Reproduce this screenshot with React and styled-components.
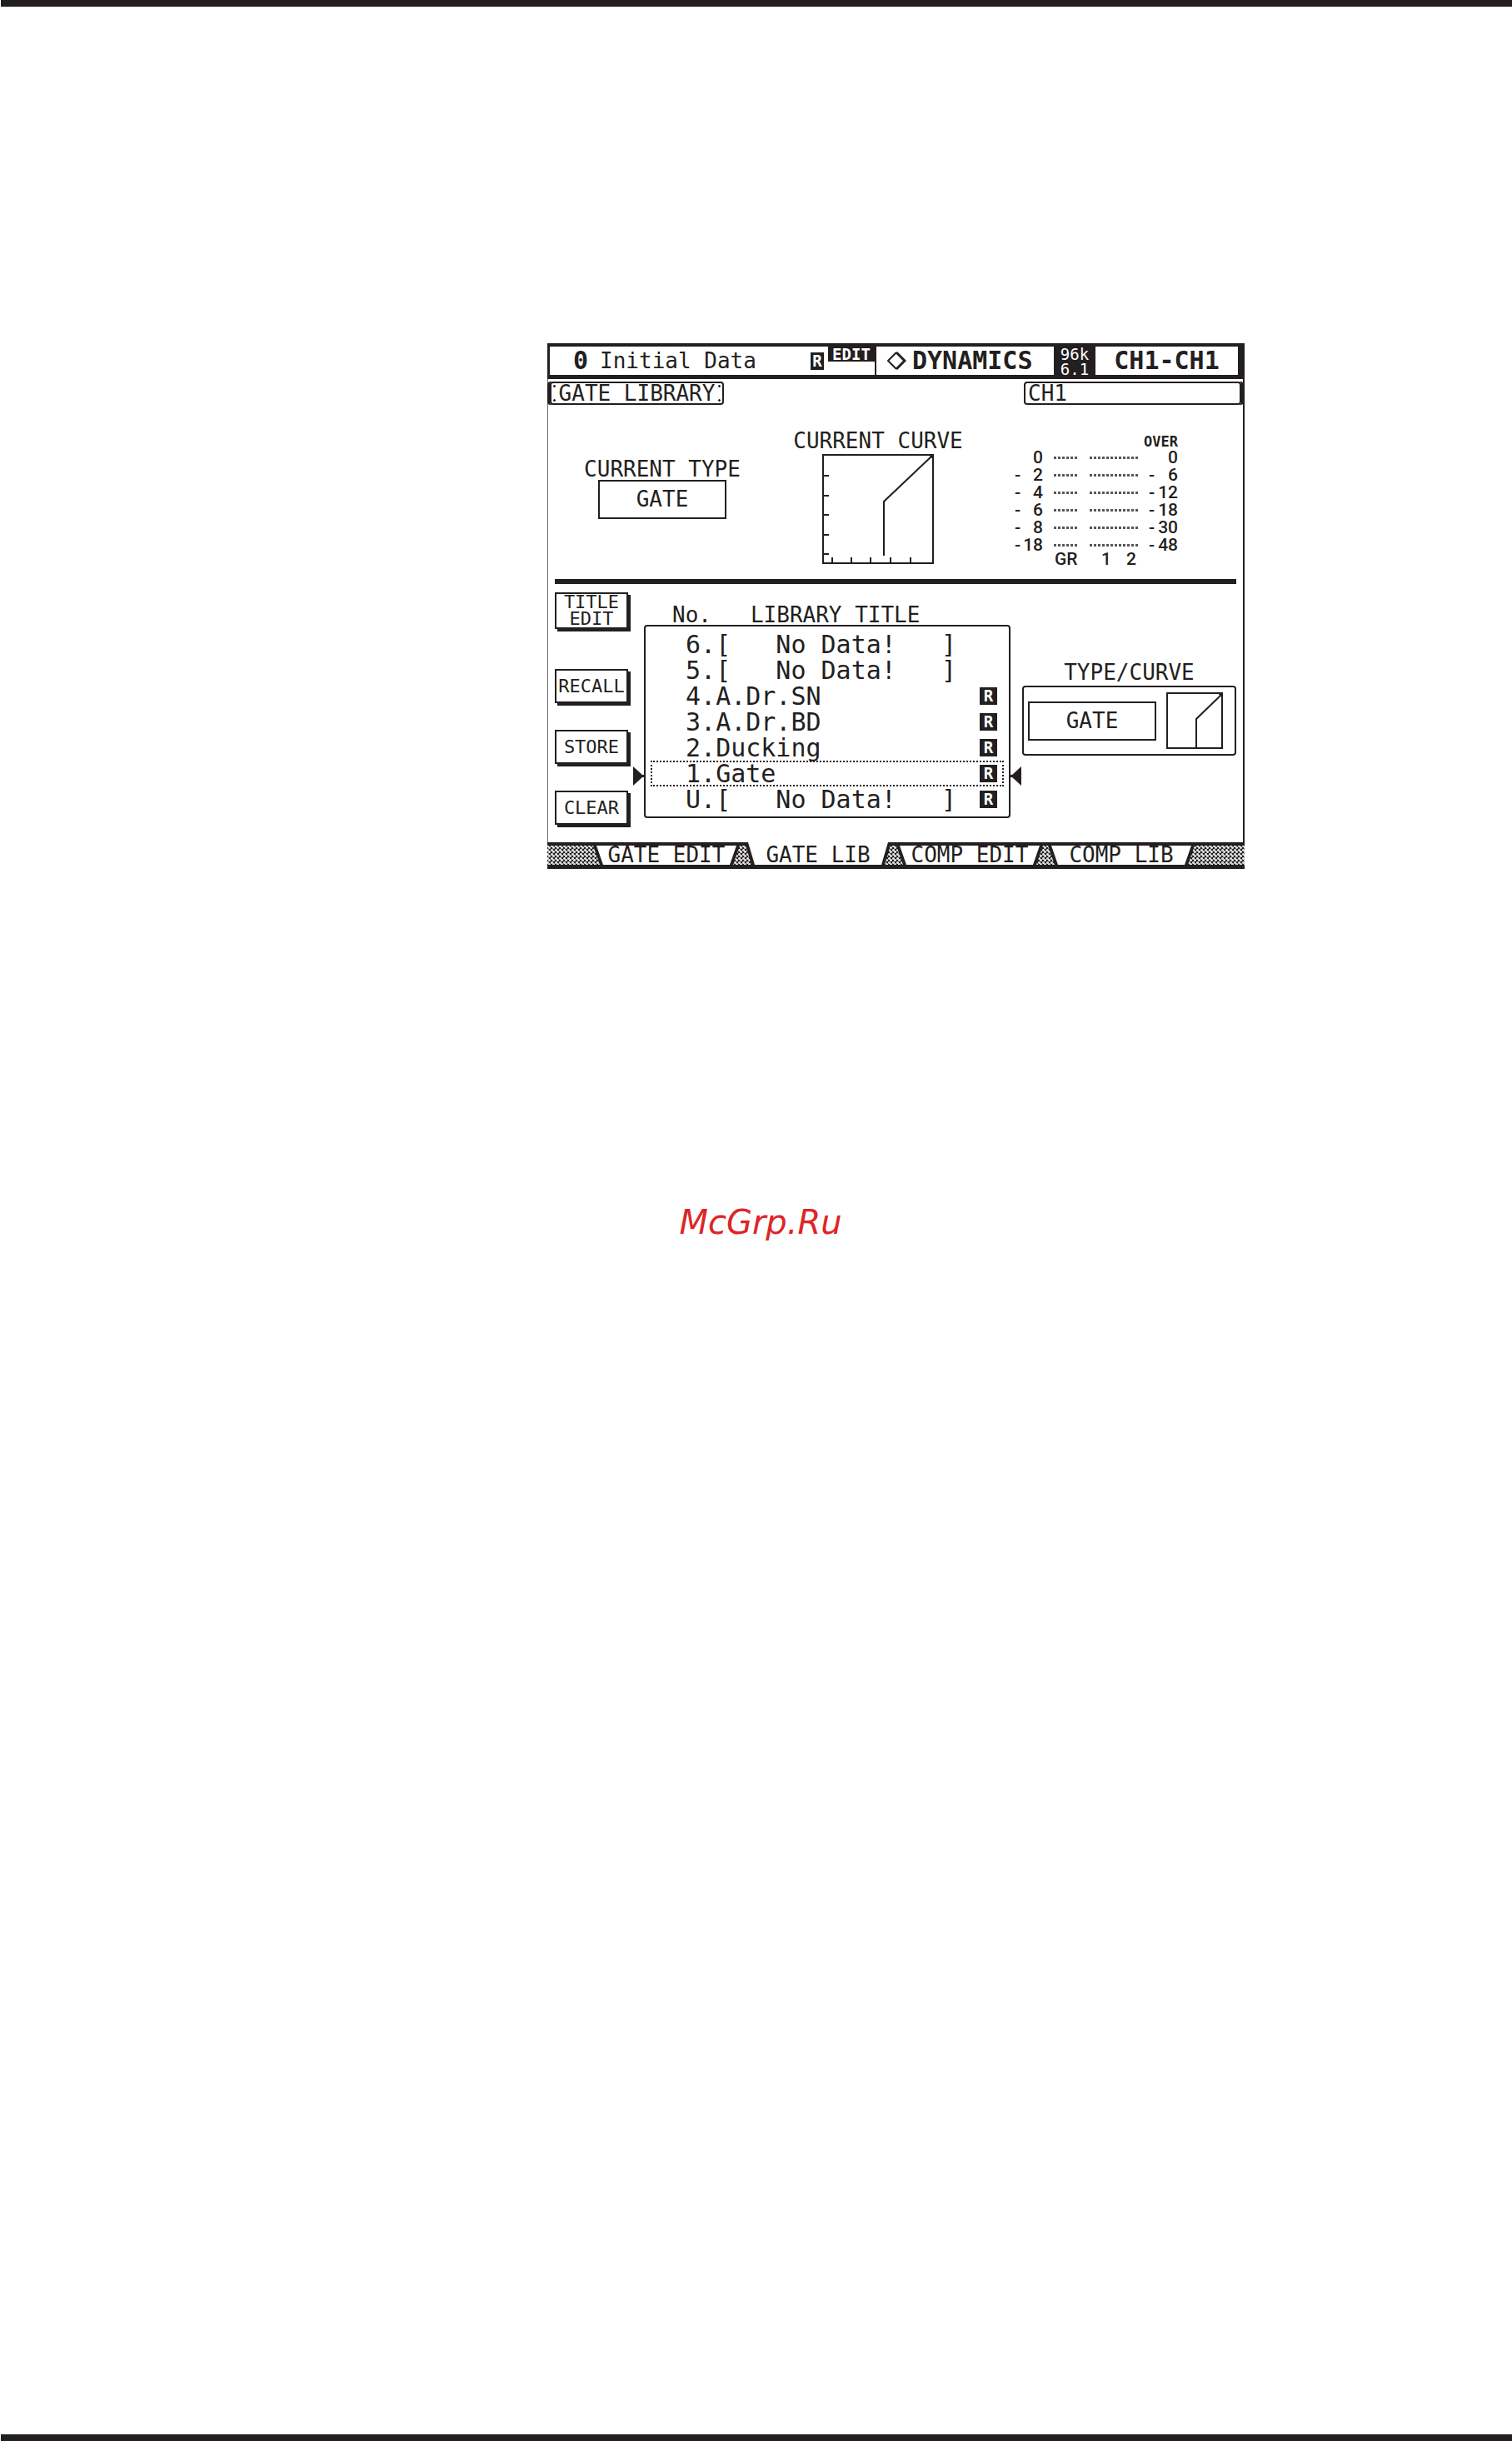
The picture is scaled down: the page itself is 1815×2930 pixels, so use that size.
import { useState } from "react";
import styled, { createGlobalStyle } from "styled-components";

const ink = "#231f20";
const mono = '"DejaVu Sans Mono", monospace';

const GlobalStyle = createGlobalStyle`
  * {
    box-sizing: border-box;
  }
  body {
    margin: 0;
    background: #fff;
    color: ${ink};
    font-family: ${mono};
  }
  button {
    margin: 0;
    padding: 0;
    border: 0;
    border-radius: 0;
    background: none;
    color: inherit;
    font-family: inherit;
    cursor: pointer;
  }
`;

const Page = styled.div`
  display: flex;
  flex-direction: column;
  min-height: 100vh;
`;

const PageRule = styled.div`
  height: 8px;
  margin-left: 1px;
  background: ${ink};
  ${({ $bottom }) => $bottom && "margin-top: auto;"}
`;

const Figure = styled.main`
  display: grid;
  grid-template-columns: 657px minmax(0, 837px);
  padding-top: 404px;
`;

const Screen = styled.section`
  grid-column: 2;
`;

const Watermark = styled.p`
  margin: 400px 0 0;
  padding-left: 11px;
  text-align: center;
  font: italic 40px/48px "DejaVu Sans", sans-serif;
  color: #de2526;
`;

/* header strip */
const Header = styled.header`
  display: flex;
  height: 43px;
  border: solid ${ink};
  border-width: 4px 8px 5px 3px;
`;

const SceneCell = styled.div`
  display: flex;
  flex: 1;
  align-items: center;
  padding-left: 28px;
  border-right: 2px solid ${ink};
`;

const Strong = styled.span`
  font-size: 30px;
  line-height: 34px;
  font-weight: bold;
`;

const SceneName = styled.span`
  margin: 0 auto 0 14px;
  font-size: 26px;
  line-height: 34px;
`;

const EditFlag = styled.span`
  align-self: flex-start;
  width: 56px;
  height: 18px;
  margin-left: 5px;
  background: ${ink};
  color: #fff;
  font-size: 19px;
  line-height: 18px;
  font-weight: bold;
  text-align: center;
`;

const PageCell = styled.div`
  display: flex;
  align-items: center;
  gap: 7px;
  width: 213px;
  padding-left: 12px;
`;

const RateCell = styled.div`
  width: 50px;
  background: ${ink};
  color: #fff;
  font-size: 19px;
  line-height: 18px;
  text-align: center;
`;

const ChannelCell = styled.div`
  width: 171px;
  text-align: center;
`;

const Badge = styled.span`
  display: block;
  width: ${({ $narrow }) => ($narrow ? 16 : 21)}px;
  height: 21px;
  background: ${ink};
  color: #fff;
  font-size: 19px;
  line-height: 21px;
  font-weight: bold;
  text-align: center;
`;

/* body */
const Body = styled.div`
  padding-top: 3px;
  border-left: 1px solid #6b6869;
  border-right: 2px solid ${ink};
`;

const TagRow = styled.div`
  display: flex;
  justify-content: space-between;
  padding: 0 2px;
`;

const Tag = styled.h1`
  width: ${({ $wide }) => ($wide ? 261 : 209)}px;
  height: 28px;
  margin: 0;
  padding-left: ${({ $wide }) => ($wide ? 3 : 0)}px;
  border: 2px solid ${ink};
  border-radius: 4px;
  box-shadow: ${({ $wide }) => ($wide ? 3 : -3)}px 0 0 ${ink};
  font-size: 26px;
  line-height: 24px;
  font-weight: normal;
  text-align: ${({ $wide }) => ($wide ? "left" : "center")};
  background: ${({ $wide }) =>
    $wide
      ? "none"
      : `radial-gradient(${ink} 60%, transparent 70%) 2px 2px / 3px 3px no-repeat,
         radial-gradient(${ink} 60%, transparent 70%) 2px 19px / 3px 3px no-repeat,
         radial-gradient(${ink} 60%, transparent 70%) 200px 2px / 3px 3px no-repeat,
         radial-gradient(${ink} 60%, transparent 70%) 200px 19px / 3px 3px no-repeat`};
`;

const Overview = styled.div`
  display: grid;
  grid-template-columns: 274px 244px 1fr;
  height: 209px;
`;

const Column = styled.div`
  display: flex;
  flex-direction: column;
  align-items: center;
  padding-top: ${({ $top }) => $top}px;
`;

const Caption = styled.h2`
  margin: 0 0 ${({ $gap }) => $gap}px;
  font-size: 26px;
  line-height: 22px;
  font-weight: normal;
  white-space: pre;
`;

const TypeBox = styled.div`
  width: 154px;
  height: 47px;
  border: 2px solid ${ink};
  font-size: 26px;
  line-height: 43px;
  text-align: center;
`;

const Meter = styled.div`
  padding: 35px 0 0 42px;
  font-family: Roboto, sans-serif;
  font-size: 21px;
  font-weight: 500;
`;

const MeterRow = styled.div`
  display: grid;
  grid-template-columns: 34px 56px 71px 35px;
  align-items: center;
  height: ${({ $height }) => $height || 21}px;
  line-height: ${({ $height }) => $height || 21}px;
`;

const Level = styled.span`
  display: flex;
  justify-content: space-between;
`;

const Over = styled.span`
  grid-column: 4;
  justify-self: end;
  font: bold 17px/18px ${mono};
`;

const Dots = styled.span`
  width: ${({ $count }) => $count * 5}px;
  height: 3px;
  margin-left: ${({ $inset }) => ($inset ? 13 : 0)}px;
  background: repeating-linear-gradient(90deg, #5a5657 0 3px, transparent 3px 5px);
`;

const MeterName = styled.span`
  grid-column: ${({ $column }) => $column};
  display: flex;
  gap: 18px;
  padding-left: 14px;
`;

const Divider = styled.hr`
  height: 6px;
  margin: 0 8px;
  border: 0;
  background: ${ink};
`;

const Library = styled.div`
  display: grid;
  grid-template-columns: 93px 440px 1fr;
  column-gap: 14px;
  height: 310px;
  padding: 0 8px;
`;

const Actions = styled.div`
  display: flex;
  flex-direction: column;
  gap: 32px;
  padding-top: 10px;
`;

const ActionButton = styled.button`
  width: 88px;
  height: ${({ $tall }) => ($tall ? 44 : 41)}px;
  margin-bottom: ${({ $tall }) => ($tall ? 16 : 0)}px;
  border: 2px solid ${ink};
  box-shadow: 3px 3px 0 ${ink};
  font-size: 22px;
  line-height: 20px;
`;

const ListPane = styled.div`
  padding-top: 26px;
`;

const ListHead = styled(Caption)`
  padding-left: 34px;
`;

const List = styled.ul`
  margin: 0;
  padding: 6px 6px 5px;
  border: 2px solid ${ink};
  border-radius: 4px;
  list-style: none;
`;

const Item = styled.li`
  position: relative;
`;

const ItemButton = styled.button`
  display: flex;
  align-items: center;
  justify-content: space-between;
  width: 100%;
  height: 31px;
  padding: 0 6px 0 40px;
  border: 2px dotted ${({ $selected }) => ($selected ? ink : "transparent")};
  font-size: 30px;
  line-height: 27px;
  white-space: pre;
`;

const Arrow = styled.svg`
  position: absolute;
  top: 7px;
  ${({ $side }) => $side}: -21px;
  width: 13px;
  height: 23px;
  fill: ${ink};
`;

const PreviewBox = styled.div`
  display: flex;
  align-items: center;
  gap: 12px;
  width: 100%;
  height: 84px;
  padding-left: 5px;
  border: 2px solid ${ink};
  border-radius: 4px;
`;

const TabStrip = styled.nav`
  display: flex;
  gap: 6px;
  height: 32px;
  padding-left: 55px;
  border: solid ${ink};
  border-width: 4px 0 5px;
  background-color: ${ink};
  background-image: radial-gradient(#ddd 1px, transparent 2px),
    radial-gradient(#ddd 1px, transparent 2px);
  background-size: 5px 5px;
  background-position: 0 0, 3px 3px;
`;

const Tab = styled.button`
  position: relative;
  z-index: 0;
  width: 176px;
  height: ${({ $active }) => ($active ? 27 : 23)}px;
  margin-top: ${({ $active }) => ($active ? -4 : 0)}px;
  padding-top: ${({ $active }) => ($active ? 4 : 0)}px;
  background: ${ink};
  clip-path: polygon(0 0, 100% 0, calc(100% - 8px) 100%, 8px 100%);
  font-size: 26px;
  line-height: 23px;

  &::before {
    content: "";
    position: absolute;
    z-index: -1;
    inset: 0 4px;
    background: #fff;
    clip-path: polygon(0 0, 100% 0, calc(100% - 8px) 100%, 8px 100%);
  }
`;

const levels = [
  ["", "0", "", "0"],
  ["-", "2", "-", "6"],
  ["-", "4", "-", "12"],
  ["-", "6", "-", "18"],
  ["-", "8", "-", "30"],
  ["-", "18", "-", "48"],
];

const presets = [
  { no: "6", title: "[   No Data!   ]" },
  { no: "5", title: "[   No Data!   ]" },
  { no: "4", title: "A.Dr.SN", readOnly: true },
  { no: "3", title: "A.Dr.BD", readOnly: true },
  { no: "2", title: "Ducking", readOnly: true },
  { no: "1", title: "Gate", readOnly: true },
  { no: "U", title: "[   No Data!   ]", readOnly: true },
];

const tabs = ["GATE EDIT", "GATE LIB", "COMP EDIT", "COMP LIB"];

function CurrentCurve() {
  return (
    <svg width="134" height="132" fill="none" stroke={ink} strokeWidth="2">
      <rect x="1" y="1" width="132" height="130" />
      <path d="M2 26h6M2 50h6M2 73h6M2 97h6M2 120h6" />
      <path d="M12 130v-6M35 130v-6M58 130v-6M82 130v-6M106 130v-6" />
      <path d="M74 122V57L132 2" />
      <path d="M129 1h4v4z" fill={ink} />
    </svg>
  );
}

function PresetCurve() {
  return (
    <svg width="68" height="68" fill="none" stroke={ink} strokeWidth="2">
      <rect x="1" y="1" width="66" height="66" />
      <path d="M36 67V32L66 3" />
      <path d="M63 1h4v4z" fill={ink} />
    </svg>
  );
}

export default function App() {
  const [selected, setSelected] = useState("1");
  const [tab, setTab] = useState("GATE LIB");

  return (
    <>
      <GlobalStyle />
      <Page>
        <PageRule />
        <Figure>
          <Screen>
            <Header>
              <SceneCell>
                <Strong>0</Strong>
                <SceneName>Initial Data</SceneName>
                <Badge $narrow>R</Badge>
                <EditFlag>EDIT</EditFlag>
              </SceneCell>
              <PageCell>
                <svg width="24" height="24" fill="none" stroke={ink} strokeWidth="2">
                  <path d="M12 2L2 12l10 10" />
                  <path d="M12 2l10 10-10 10" strokeWidth="3" />
                </svg>
                <Strong>DYNAMICS</Strong>
              </PageCell>
              <RateCell>
                96k
                <br />
                6.1
              </RateCell>
              <ChannelCell>
                <Strong>CH1-CH1</Strong>
              </ChannelCell>
            </Header>

            <Body>
              <TagRow>
                <Tag>GATE LIBRARY</Tag>
                <Tag as="div" $wide>
                  CH1
                </Tag>
              </TagRow>

              <Overview>
                <Column $top={66}>
                  <Caption $gap={2}>CURRENT TYPE</Caption>
                  <TypeBox>GATE</TypeBox>
                </Column>
                <Column $top={32}>
                  <Caption $gap={5}>CURRENT CURVE</Caption>
                  <CurrentCurve />
                </Column>
                <Meter>
                  <MeterRow $height={18}>
                    <Over>OVER</Over>
                  </MeterRow>
                  {levels.map(([grSign, gr, outSign, out]) => (
                    <MeterRow key={gr}>
                      <Level>
                        <span>{grSign}</span>
                        <span>{gr}</span>
                      </Level>
                      <Dots $count={6} $inset />
                      <Dots $count={12} />
                      <Level>
                        <span>{outSign}</span>
                        <span>{out}</span>
                      </Level>
                    </MeterRow>
                  ))}
                  <MeterRow $height={12}>
                    <MeterName $column={2}>GR</MeterName>
                    <MeterName $column={3}>
                      <span>1</span>
                      <span>2</span>
                    </MeterName>
                  </MeterRow>
                </Meter>
              </Overview>

              <Divider />

              <Library>
                <Actions>
                  <ActionButton $tall>
                    TITLE
                    <br />
                    EDIT
                  </ActionButton>
                  <ActionButton>RECALL</ActionButton>
                  <ActionButton>STORE</ActionButton>
                  <ActionButton>CLEAR</ActionButton>
                </Actions>

                <ListPane>
                  <ListHead $gap={1}>{"No.   LIBRARY TITLE"}</ListHead>
                  <List>
                    {presets.map(({ no, title, readOnly }) => (
                      <Item key={no}>
                        <ItemButton
                          $selected={selected === no}
                          onClick={() => setSelected(no)}
                        >
                          {no}.{title}
                          {readOnly && <Badge>R</Badge>}
                        </ItemButton>
                        {selected === no && (
                          <>
                            <Arrow $side="left" viewBox="0 0 13 23">
                              <path d="M0 0l11 10h2v3h-2L0 23z" />
                            </Arrow>
                            <Arrow $side="right" viewBox="0 0 13 23">
                              <path d="M13 0L2 10H0v3h2l11 10z" />
                            </Arrow>
                          </>
                        )}
                      </Item>
                    ))}
                  </List>
                </ListPane>

                <Column $top={95}>
                  <Caption $gap={5}>TYPE/CURVE</Caption>
                  <PreviewBox>
                    <TypeBox>GATE</TypeBox>
                    <PresetCurve />
                  </PreviewBox>
                </Column>
              </Library>
            </Body>

            <TabStrip>
              {tabs.map((name) => (
                <Tab key={name} $active={tab === name} onClick={() => setTab(name)}>
                  {name}
                </Tab>
              ))}
            </TabStrip>
          </Screen>
        </Figure>
        <Watermark>McGrp.Ru</Watermark>
        <PageRule $bottom />
      </Page>
    </>
  );
}
